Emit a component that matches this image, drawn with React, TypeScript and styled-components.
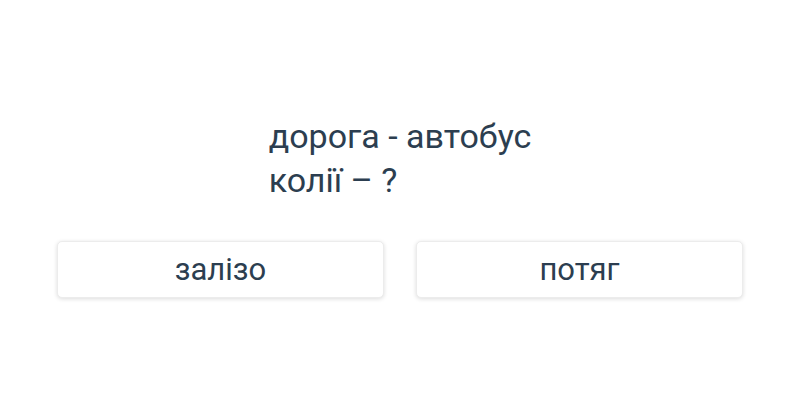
import styled, { createGlobalStyle } from "styled-components"

const GlobalStyle = createGlobalStyle`
  html, body {
    margin: 0;
    padding: 0;
    background: #ffffff;
  }
  body {
    font-family: Roboto, "Noto Sans", sans-serif;
    color: #2c3e50;
  }
`

const Page = styled.div`
  width: 800px;
  height: 400px;
  box-sizing: border-box;
  padding: 114px 57px 0;
  display: flex;
  flex-direction: column;
  align-items: center;
`

const Question = styled.div`
  display: inline-block;
  text-align: left;
  font-size: 34px;
  line-height: 44px;
`

const Answers = styled.div`
  align-self: stretch;
  margin-top: 39px;
  display: grid;
  grid-template-columns: 1fr 1fr;
  gap: 32px;
`

const AnswerBtn = styled.button`
  height: 57px;
  border: 1px solid #ececec;
  border-radius: 5px;
  background: #ffffff;
  box-shadow: 0 1px 4px rgba(0, 0, 0, 0.14);
  font-family: Roboto, "Noto Sans", sans-serif;
  font-size: 31px;
  color: #2c3e50;
  cursor: pointer;
  padding: 0;
`

const answers = ["залізо", "потяг"]

export default function App() {
  return (
    <>
      <GlobalStyle />
      <Page>
        <Question>
          <div>дорога - автобус</div>
          <div>колії – ?</div>
        </Question>
        <Answers>
          {answers.map(a => <AnswerBtn key={a}>{a}</AnswerBtn>)}
        </Answers>
      </Page>
    </>
  )
}
